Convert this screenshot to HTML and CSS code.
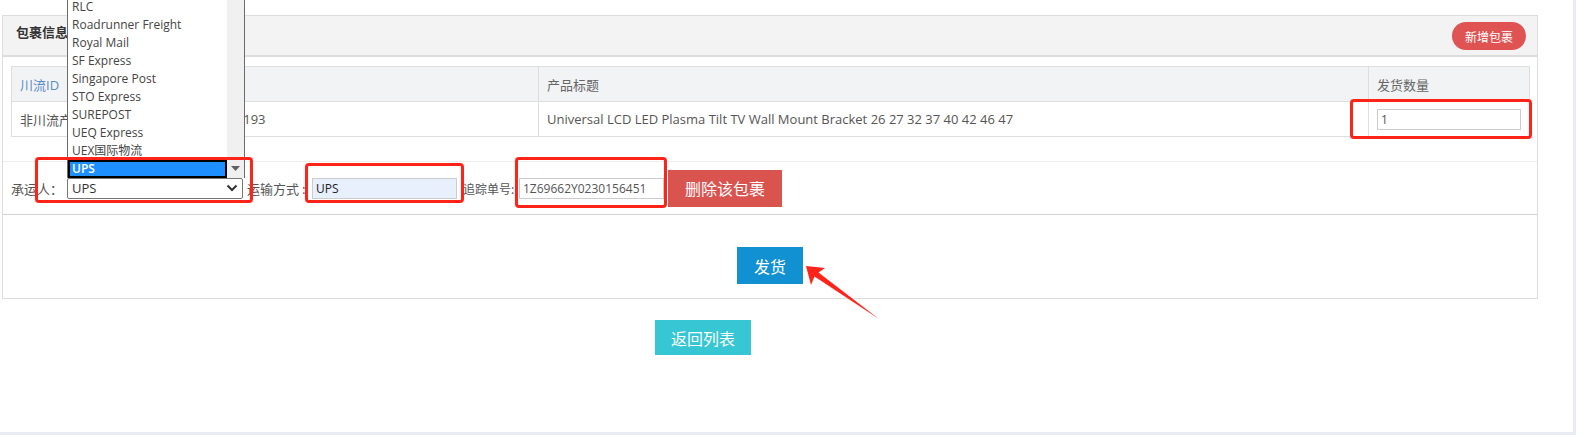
FILE: index.html
```html
<!DOCTYPE html>
<html lang="zh">
<head>
<meta charset="utf-8">
<title>包裹信息</title>
<link rel="stylesheet" href="styles.css">
</head>
<body>
<div class="page">
  <div class="panel">
    <div class="panel-head">
      <span class="title">包裹信息</span>
      <button class="btn-add">新增包裹</button>
    </div>
    <div class="panel-body">
      <table class="items">
        <thead>
          <tr>
            <th class="c1"><span class="link">川流ID</span></th>
            <th class="c2">SKU</th>
            <th class="c3">产品标题</th>
            <th class="c4">发货数量</th>
          </tr>
        </thead>
        <tbody>
          <tr>
            <td>非川流产品</td>
            <td>BK201906250193</td>
            <td>Universal LCD LED Plasma Tilt TV Wall Mount Bracket 26 27 32 37 40 42 46 47</td>
            <td><input class="qty" type="text" value="1"></td>
          </tr>
        </tbody>
      </table>
      <div class="pkg-row">
        <span class="lbl l-carrier">承运人：</span>
        <div class="sel-wrap">
          <div class="sel">
            <span>UPS</span>
            <svg class="chev" width="12" height="8" viewBox="0 0 12 8"><path d="M1.5 1.5 L6 6 L10.5 1.5" fill="none" stroke="#333" stroke-width="2"/></svg>
          </div>
          <div class="popup">
            <div class="opts">
              <div class="opt">RLC</div>
              <div class="opt">Roadrunner Freight</div>
              <div class="opt">Royal Mail</div>
              <div class="opt">SF Express</div>
              <div class="opt">Singapore Post</div>
              <div class="opt">STO Express</div>
              <div class="opt">SUREPOST</div>
              <div class="opt">UEQ Express</div>
              <div class="opt">UEX国际物流</div>
              <div class="opt on">UPS</div>
            </div>
            <div class="sbar">
              <div class="sbtn"><svg width="9" height="5" viewBox="0 0 9 5"><path d="M0 0 H9 L4.5 5 Z" fill="#606060"/></svg></div>
            </div>
          </div>
        </div>
        <span class="lbl l-ship">运输方式 :</span>
        <input class="inp ship" type="text" value="UPS">
        <span class="lbl l-track">追踪单号:</span>
        <input class="inp track" type="text" value="1Z69662Y0230156451">
        <button class="btn-del">删除该包裹</button>
      </div>
    </div>
    <div class="panel-foot">
      <button class="btn-ship">发货</button>
    </div>
  </div>
  <div class="back-row">
    <button class="btn-back">返回列表</button>
  </div>

  <div class="mark m1"></div>
  <div class="mark m2"></div>
  <div class="mark m3"></div>
  <div class="mark m4"></div>
  <svg class="arrow" width="1573" height="432" viewBox="0 0 1573 432">
    <polygon points="806,266 825,268 818.5,272.5 879,319 814.5,276.5 811,285" fill="#ff2419"/>
  </svg>
</div>
</body>
</html>
```
FILE: styles.css
```css
html, body {
  margin: 0;
  padding: 0;
}
body {
  background: #e9ecf3;
  font-family: "Open Sans", "Noto Sans CJK SC", sans-serif;
  font-size: 13px;
  color: #555;
}
.page {
  position: relative;
  width: 1573px;
  height: 432px;
  background: #fff;
  overflow: hidden;
}
.panel {
  margin: 15px 0 0 2px;
  width: 1534px;
  border: 1px solid #ddd;
}
.panel-head {
  height: 39px;
  background: #f3f3f4;
  border-bottom: 2px solid #dcdcdc;
  display: flex;
  align-items: center;
  justify-content: space-between;
  padding: 0 11px 0 13px;
}
.title {
  align-self: flex-start;
  margin-top: 7px;
  line-height: 18px;
  font-weight: bold;
  color: #333;
  font-size: 13px;
}
.btn-add {
  width: 74px;
  height: 28px;
  border: 0;
  border-radius: 14px;
  background: #e05353;
  color: #fff;
  font-family: "Noto Sans CJK SC", sans-serif;
  font-size: 12px;
  padding: 0;
  margin-top: 1px;
}
.panel-body {
  border-bottom: 1px solid #d2d2d2;
  padding: 9px 7px 0 8px;
}
.items {
  width: 100%;
  border-collapse: collapse;
  border: 1px solid #dedede;
  table-layout: fixed;
}
.items th, .items td {
  border: 1px solid #dedede;
  border-top: 0;
  border-bottom: 0;
  text-align: left;
  font-weight: normal;
  padding: 0 8px;
  white-space: nowrap;
  overflow: hidden;
}
.items thead tr {
  background: #f2f3f5;
  height: 35px;
}
.items th {
  color: #666;
}
.items tbody tr {
  height: 35px;
  border-top: 1px solid #dedede;
}
.items td {
  color: #555;
}
.c1 { width: 123px; }
.c2 { width: 370px; }
.c4 { width: 144px; }
.link { color: #5b8cc4; }
.qty {
  box-sizing: border-box;
  width: 100%;
  height: 21px;
  border: 1px solid #ccc;
  padding: 0 3px;
  font-family: "Open Sans", sans-serif;
  font-size: 12px;
  color: #555;
  display: block;
}
.pkg-row {
  margin: 24px -7px 0 -8px;
  border-top: 1px solid #eee;
  height: 52px;
  display: flex;
  align-items: center;
  padding-left: 8px;
}
.lbl {
  font-family: "Noto Sans CJK SC", sans-serif;
  font-size: 13px;
  color: #555;
  white-space: nowrap;
}
.l-carrier { margin-right: 4px; width: 52px; }
.l-ship { margin-left: 4px; width: 65px; }
.l-track { margin-left: 6px; width: 52px; margin-right: 4px; font-size: 12px; }
.sel-wrap {
  position: relative;
  width: 176px;
  height: 21px;
}
.sel {
  box-sizing: border-box;
  height: 21px;
  border: 1px solid #767676;
  border-radius: 2px;
  background: #fff;
  display: flex;
  align-items: center;
  justify-content: space-between;
  padding: 0 3px 0 4px;
  color: #333;
  font-size: 13px;
}
.chev { margin-right: 1px; }
.popup {
  position: absolute;
  left: 0;
  bottom: 100%;
  width: 178px;
  box-sizing: border-box;
  border: 1px solid #6b6b6b;
  border-bottom: 0;
  background: #fff;
  display: flex;
  z-index: 5;
}
.opts {
  flex: 1;
  display: flex;
  flex-direction: column;
}
.opt {
  height: 18px;
  line-height: 18px;
  padding-left: 4px;
  font-size: 12px;
  color: #444;
  white-space: nowrap;
}
.opt.on {
  box-sizing: border-box;
  background: #1e8fff;
  border: 2px solid #000;
  color: #fff;
  padding-left: 2px;
  line-height: 14px;
  font-weight: 600;
}
.sbar {
  width: 17px;
  background: #f0f0f0;
  display: flex;
  flex-direction: column;
  justify-content: flex-end;
}
.sbtn {
  height: 18px;
  display: flex;
  align-items: center;
  justify-content: center;
}
.inp {
  box-sizing: border-box;
  width: 145px;
  height: 21px;
  border: 1px solid #ccc;
  padding: 0 3px;
  font-family: "Open Sans", sans-serif;
  font-size: 12px;
  color: #555;
}
.ship {
  background: #e8f0fe;
  color: #222;
}
.btn-del {
  margin-left: 4px;
  width: 114px;
  height: 37px;
  border: 0;
  background: #d9534f;
  color: #fff;
  font-family: "Noto Sans CJK SC", sans-serif;
  font-size: 16px;
  padding: 0;
}
.panel-foot {
  height: 83px;
  display: flex;
  justify-content: center;
  align-items: flex-start;
}
.btn-ship {
  margin-top: 32px;
  width: 66px;
  height: 37px;
  border: 0;
  background: #1190d2;
  color: #fff;
  font-family: "Noto Sans CJK SC", sans-serif;
  font-size: 16px;
  padding: 0;
}
.back-row {
  padding: 21px 0 0 655px;
}
.btn-back {
  width: 96px;
  height: 35px;
  border: 0;
  background: #37c6d4;
  color: #fff;
  font-family: "Noto Sans CJK SC", sans-serif;
  font-size: 16px;
  padding: 0;
}
.mark {
  position: absolute;
  box-sizing: border-box;
  border: 3px solid #ff2419;
  border-radius: 4px;
  z-index: 10;
}
.m1 { left: 35px; top: 157px; width: 218px; height: 46px; }
.m2 { left: 305px; top: 163px; width: 159px; height: 40px; }
.m3 { left: 515px; top: 157px; width: 152px; height: 51px; }
.m4 { left: 1350px; top: 99px; width: 182px; height: 40px; }
.arrow {
  position: absolute;
  left: 0;
  top: 0;
  z-index: 11;
  pointer-events: none;
}
```
